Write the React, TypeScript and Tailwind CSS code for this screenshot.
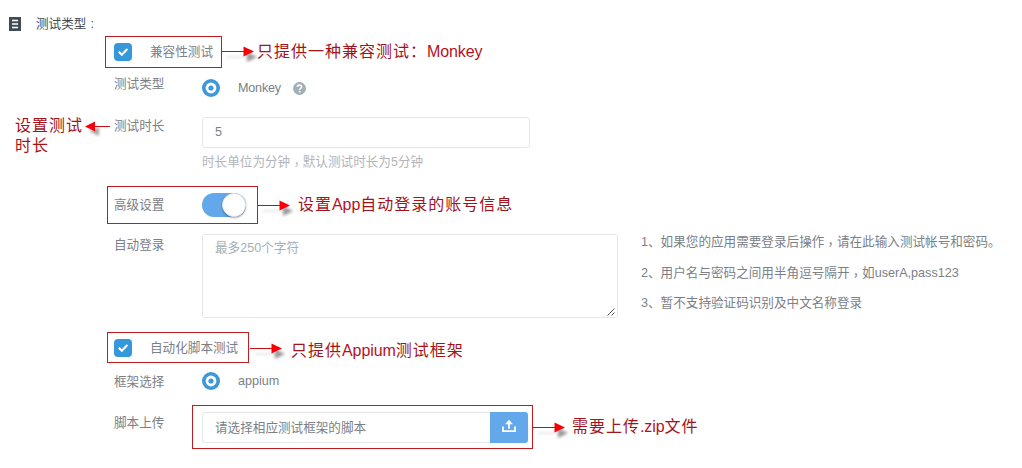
import type { ReactNode } from "react";

const cjkStack = "font-['Liberation_Sans','Noto_Sans_CJK_SC',sans-serif]";

function Label({ children, className = "" }: { children: ReactNode; className?: string }) {
  return <div className={`w-[88px] shrink-0 leading-5 ${className}`}>{children}</div>;
}

function Comma() {
  return <span className="inline-block translate-y-[3px] font-['Noto_Sans_CJK_TC',sans-serif] leading-none">，</span>;
}

function Checkbox() {
  return (
    <span className="flex size-[18px] shrink-0 items-center justify-center rounded bg-[#3498db]">
      <svg width="18" height="18" viewBox="0 0 18 18" fill="none" stroke="#fff" strokeWidth="2">
        <path d="M4.8 8.8l3 3L13.4 6" />
      </svg>
    </span>
  );
}

function Radio() {
  return (
    <svg className="shrink-0" width="18" height="18" viewBox="0 0 18 18">
      <circle cx="9" cy="9" r="9" fill="#3d97d9" />
      <circle cx="9" cy="9" r="5.4" fill="#fff" />
      <circle cx="9" cy="9" r="2.6" fill="#3d97d9" />
    </svg>
  );
}

function Arrow({ className, left = false }: { className: string; left?: boolean }) {
  return (
    <svg className={`absolute overflow-visible ${className}`} width={left ? 25 : 32} height="20" viewBox={left ? "0 0 25 20" : "0 0 32 20"}>
      {left ? (
        <path className="blur-[1.5px]" opacity="0.5" d="M4 13l10-4v9z" fill="#444" />
      ) : (
        <>
          <path className="blur-[1.5px]" opacity="0.5" d="M25 9l10 5-10 5z" fill="#333" />
          <path className="blur-[1.5px]" opacity="0.2" d="M5 13h20v2H5z" fill="#888" />
        </>
      )}
      {left ? (
        <>
          <path d="M9 8.5h16" stroke="#d40d12" />
          <path d="M0 8.5L10 3.5v10z" fill="#f90008" />
        </>
      ) : (
        <>
          <path d="M0 8.5h23" stroke="#c80d12" />
          <path d="M21.5 3.5l10.5 5-10.5 5z" fill="#f90008" />
        </>
      )}
    </svg>
  );
}

function Note({ className, children }: { className: string; children: ReactNode }) {
  return (
    <div className={`absolute whitespace-nowrap text-base leading-5 tracking-[1px] text-[#a3131a] ${className}`}>{children}</div>
  );
}

function Latin({ children }: { children: ReactNode }) {
  return <span className="tracking-[-0.1px] text-[#b80f22]">{children}</span>;
}

const outline = "pointer-events-none absolute border border-[#c01c20]";

export default function App() {
  return (
    <main className={`relative h-[468px] w-[1022px] overflow-hidden bg-white text-[12.6px] text-[#7b8087] ${cjkStack}`}>
      <header className="flex h-9 items-center pt-3 pl-[9px] text-[#454b54]">
        <svg width="13" height="14" viewBox="0 0 13 14">
          <path d="M0 0h12v14H0z" fill="#414b57" />
          <path d="M3 3.5h6M3 7h6M3 10.5h6" stroke="#fff" strokeWidth="1.3" />
        </svg>
        <span className="ml-[14px]">测试类型<span className="ml-[4px]">:</span></span>
      </header>

      <form className="pl-[114px]">
        <div className="flex h-8 items-center gap-[18px]">
          <Checkbox />
          <span className="leading-5">兼容性测试</span>
        </div>

        <div className="flex h-9 items-start pt-[5px]">
          <Label className="mt-px">测试类型</Label>
          <div className="flex items-center pt-[5px]">
            <Radio />
            <span className="ml-[18px] leading-5 tracking-[-0.2px]">Monkey</span>
            <svg className="ml-3" width="13" height="13" viewBox="0 0 13 13" fill="none">
              <circle cx="6.5" cy="6.5" r="6.5" fill="#a3afb7" />
              <path d="M4.4 5c0-2.6 4.2-2.6 4.2-.1 0 1.5-2 1.3-2 2.9" stroke="#fff" strokeWidth="1.6" />
              <path d="M5.8 8.8h1.7v1.6H5.8z" fill="#fff" />
            </svg>
          </div>
        </div>

        <div className="flex h-[74px] items-start">
          <Label className="mt-3">测试时长</Label>
          <div className="pt-[13px]">
            <div className="flex h-[31px] w-[328px] items-center rounded-[3px] border border-[#e4e7ea] px-3">5</div>
            <p className="mt-1 leading-5 text-[#b3b5ba]">时长单位为分钟<Comma />默认测试时长为5分钟</p>
          </div>
        </div>

        <div className="flex h-[52px] items-start">
          <Label className="mt-[17px]">高级设置</Label>
          <span className="mt-[15px] flex h-6 w-11 justify-end rounded-full bg-[#62a8ea]">
            <span className="size-6 rounded-full border border-[#e1e4e8] bg-white shadow-[0_1px_2px_rgba(0,0,0,0.35)]" />
          </span>
        </div>

        <div className="flex h-[100px] items-start">
          <Label className="mt-[5px]">自动登录</Label>
          <div className="mt-1 flex h-[84px] w-[416px] shrink-0 items-start justify-between rounded-[3px] border border-[#e4e7ea] pt-[3px] pl-3">
            <span className="leading-5 text-[#a3afb7]">最多250个字符</span>
            <svg className="self-end" width="11" height="10" viewBox="0 0 11 10" stroke="#555" strokeWidth="1">
              <path d="M1.5 8.5l7-7M5.5 8.5l3-3" />
            </svg>
          </div>
          <ul className="ml-[23px] space-y-[10.5px] pt-[2px] leading-5 whitespace-nowrap">
            <li>1、如果您的应用需要登录后操作<Comma />请在此输入测试帐号和密码。</li>
            <li>2、用户名与密码之间用半角逗号隔开<Comma />如userA,pass123</li>
            <li>3、暂不支持验证码识别及中文名称登录</li>
          </ul>
        </div>

        <div className="flex h-9 items-center gap-[18px]">
          <Checkbox />
          <span className="leading-5">自动化脚本测试</span>
        </div>

        <div className="flex h-[38px] items-start pt-[5px]">
          <Label className="mt-px">框架选择</Label>
          <div className="flex items-center">
            <Radio />
            <span className="ml-[18px] leading-5">appium</span>
          </div>
        </div>

        <div className="flex items-start pt-2">
          <Label className="mt-px">脚本上传</Label>
          <div className="flex h-[31px] w-[326px]">
            <div className="flex flex-1 items-center rounded-l-[3px] border border-r-0 border-[#e4e7ea] px-3 pt-0.5">请选择相应测试框架的脚本</div>
            <button type="button" className="flex w-[38px] items-center justify-center rounded-r-[3px] bg-[#62a8ea]">
              <svg className="-mt-1" width="14" height="14" viewBox="0 0 14 14" fill="none" stroke="#fff" strokeWidth="1.8">
                <path d="M1 7.5v4.6h12V7.5M7 9.8V3" />
                <path d="M3 5.2L7 .8l4 4.4z" fill="#fff" stroke="none" />
              </svg>
            </button>
          </div>
        </div>
      </form>

      <div className={`${outline} top-9 left-[105px] h-8 w-[117px]`} />
      <Arrow className="top-[43px] left-[222px]" />
      <Note className="top-[42px] left-[257px]">只提供一种兼容测试：<Latin>Monkey</Latin></Note>

      <Note className="top-[116px] left-[15px]">设置测试<br />时长</Note>
      <Arrow left className="top-[118px] left-[85px]" />

      <div className={`${outline} top-[186px] left-[107px] h-[38px] w-[151px]`} />
      <Arrow className="top-[197px] left-[258px]" />
      <Note className="top-[195px] left-[298px]">设置<Latin>App</Latin>自动登录的账号信息</Note>

      <div className={`${outline} top-[332px] left-[107px] h-[31px] w-[142px]`} />
      <Arrow className="top-[340px] left-[250px]" />
      <Note className="top-[341px] left-[291px]">只提供<Latin>Appium</Latin>测试框架</Note>

      <div className={`${outline} top-[405px] left-[192px] h-11 w-[341px]`} />
      <Arrow className="top-[419px] left-[533px]" />
      <Note className="top-[417px] left-[572px]">需要上传<Latin>.zip</Latin>文件</Note>
    </main>
  );
}
